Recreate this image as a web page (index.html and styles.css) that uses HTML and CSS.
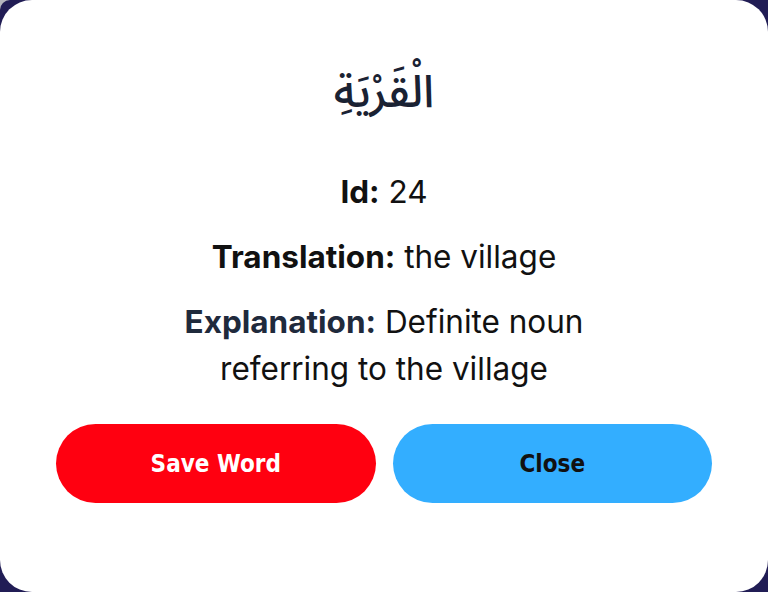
FILE: index.html
```html
<!DOCTYPE html>
<html lang="en">
<head>
<meta charset="utf-8">
<title>Word</title>
<link rel="stylesheet" href="styles.css">
</head>
<body>
<div class="frame">
  <div class="card">
    <h1 class="arabic" lang="ar" dir="rtl">الْقَرْيَةِ</h1>
    <div class="details">
      <p class="row"><strong>Id:</strong> 24</p>
      <p class="row"><strong>Translation:</strong> the village</p>
      <p class="row explain"><strong class="muted">Explanation:</strong> Definite noun referring to the village</p>
    </div>
    <div class="actions">
      <button class="btn save">Save Word</button>
      <button class="btn close">Close</button>
    </div>
  </div>
</div>
</body>
</html>
```
FILE: styles.css
```css
html {
  background: #b4b5bd;
}
body {
  margin: 0;
  width: 768px;
  height: 592px;
  overflow: hidden;
}
.frame {
  width: 768px;
  height: 592px;
  background: #211d55;
  border-top-left-radius: 10px;
}
.card {
  box-sizing: border-box;
  width: 768px;
  height: 592px;
  background: #ffffff;
  border-radius: 32px;
  padding: 60px 56px 0;
  display: flex;
  flex-direction: column;
  align-items: center;
  font-family: Inter, "Noto Sans", sans-serif;
  color: #111111;
}
.arabic {
  margin: 0;
  font-family: "Noto Sans Arabic", "Noto Naskh Arabic", "DejaVu Sans", sans-serif;
  font-weight: 500;
  font-size: 45px;
  line-height: 66px;
  color: #1a2233;
}
.details {
  margin-top: 42px;
  width: 460px;
  text-align: center;
}
.row {
  margin: 0 0 18px;
  font-size: 31.5px;
  line-height: 47px;
}
.row strong {
  font-weight: 700;
}
.row .muted {
  color: #1f2a3c;
}
.actions {
  margin-top: 14px;
  width: 100%;
  display: flex;
  gap: 17px;
}
.btn {
  flex: 1;
  height: 79px;
  border: none;
  border-radius: 40px;
  font-family: "DejaVu Sans Condensed", "DejaVu Sans", sans-serif;
  font-stretch: condensed;
  font-weight: 700;
  font-size: 24px;
}
.save {
  background: #ff0010;
  color: #ffffff;
}
.close {
  background: #33aeff;
  color: #111111;
}
```
